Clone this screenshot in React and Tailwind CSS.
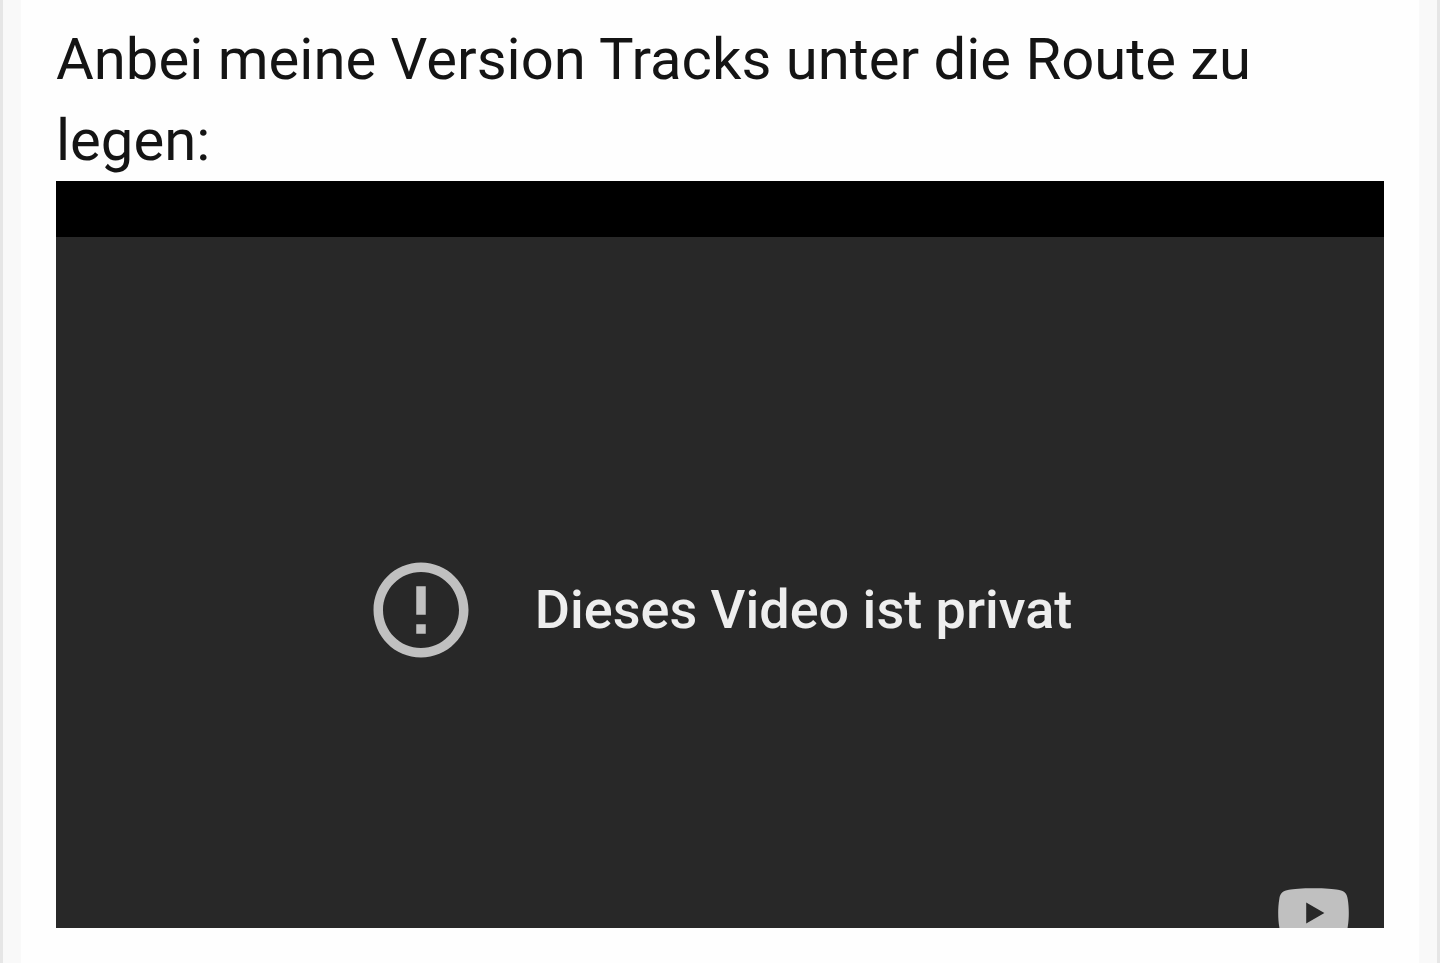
import { MdErrorOutline } from 'react-icons/md';

export default function App() {
  return (
    <div className="min-h-screen flex flex-col border-x-3 border-[#e6e6e6] bg-[#f9f9f9] px-[18px] font-[Roboto,sans-serif]">
      <article className="flex-1 bg-[#fefefe] px-[35px] pt-[19px] pb-[35px]">
        <p className="text-[58px] leading-[81px] text-[#141414]">
          Anbei meine Version Tracks unter die Route zu legen:
        </p>
        <PrivateVideo />
      </article>
    </div>
  );
}

function PrivateVideo() {
  return (
    <section aria-label="Video" className="aspect-video overflow-hidden bg-black pt-14">
      {/* Player keeps its full height, the lower edge gets cut off */}
      <div className="relative aspect-video bg-[#282828] flex items-center justify-center gap-[57px] pr-1 pb-0.5">
        <MdErrorOutline className="w-[114px] h-[114px] shrink-0 text-[#c0c0c0]" />
        <p className="text-[54px] leading-[64px] font-medium text-[#eeeeee]">Dieses Video ist privat</p>
        <a href="#youtube" aria-label="YouTube" className="absolute right-[35px] bottom-[46px]">
          <YouTubeLogo />
        </a>
      </div>
    </section>
  );
}

function YouTubeLogo() {
  return (
    <svg className="block w-[71px] h-[50px]" viewBox="0 0 71 50" fill="#c0c0c0">
      <path
        fillRule="evenodd"
        d="M35.5.3C24 .3 15 1 11 1.7C5 2.5 2 5 1.3 11C.5 16 .2 20 .2 25C.2 30 .5 34 1.3 39C2 45 5 47.5 11 48.3C15 49 24 49.7 35.5 49.7C47 49.7 56 49 60 48.3C66 47.5 69 45 69.7 39C70.5 34 70.8 30 70.8 25C70.8 20 70.5 16 69.7 11C69 5 66 2.5 60 1.7C56 1 47 .3 35.5 .3ZM28.2 14.5L46.4 25L28.2 35.5Z"
      />
    </svg>
  );
}
